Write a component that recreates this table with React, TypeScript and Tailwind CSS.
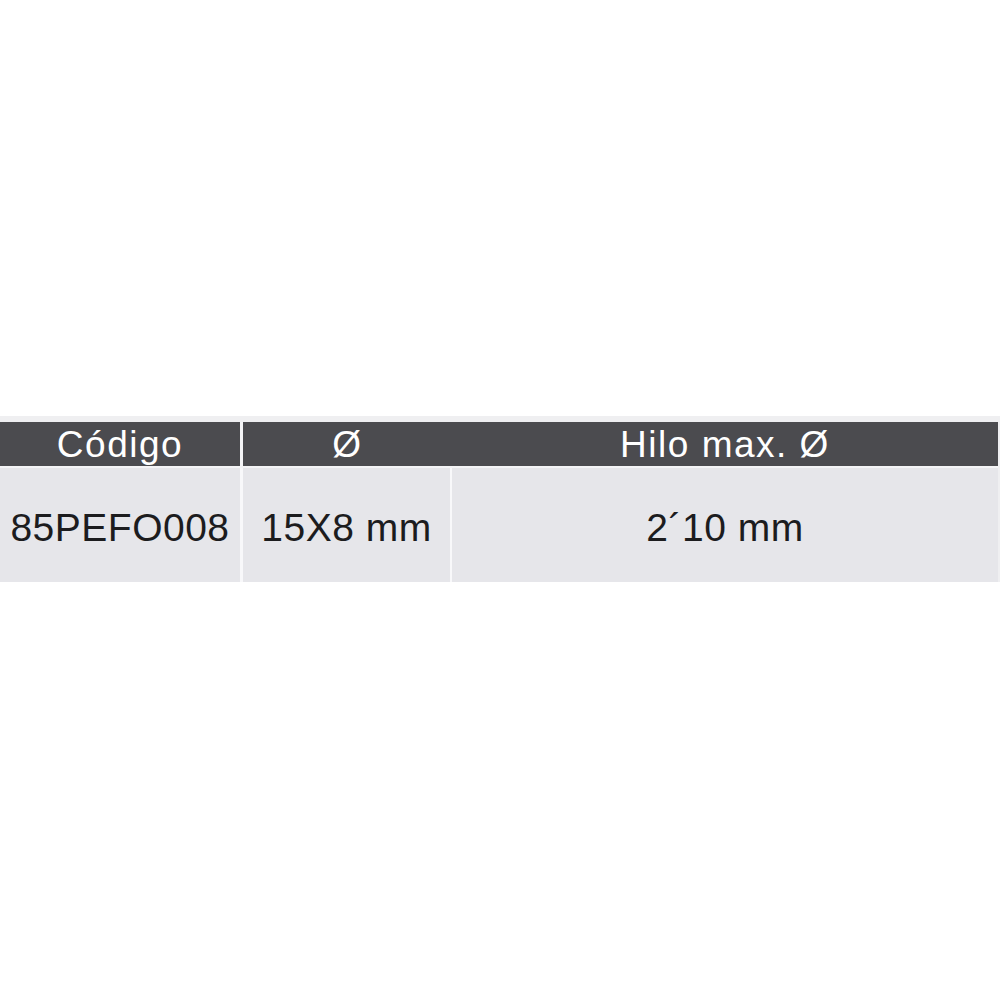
const font = { fontFamily: '"Liberation Sans", Arial, sans-serif' };

export default function App() {
  return (
    <div className="min-h-screen bg-white" style={font}>
      <div className="h-[416px]" />
      <div className="bg-[#efeff1] pt-[6px] pr-[2px]">
        <div className="flex h-[44px] bg-[#4b4b4f] text-[37px] tracking-[1.5px] text-white">
          <div className="flex w-[243px] items-center justify-center border-r-[3px] border-[#f4f4f6] pt-[1px]">
            Código
          </div>
          <div className="flex w-[209px] items-center justify-center pt-[1px]">Ø</div>
          <div className="flex flex-1 items-center justify-center pt-[1px]">Hilo max. Ø</div>
        </div>
        <div className="h-[2px] bg-[#f4f4f6]" />
        <div className="flex h-[114px] bg-[#e6e6ea] text-[39px] tracking-[0.5px] text-[#1c1c1e]">
          <div className="flex w-[243px] items-center justify-center border-r-[3px] border-[#f8f8fa] pt-[6px]">
            85PEFO008
          </div>
          <div className="flex w-[209px] items-center justify-center border-r-[2px] border-[#f8f8fa] pt-[6px]">
            15X8 mm
          </div>
          <div className="flex flex-1 items-center justify-center pt-[6px]">2´10 mm</div>
        </div>
      </div>
    </div>
  );
}
